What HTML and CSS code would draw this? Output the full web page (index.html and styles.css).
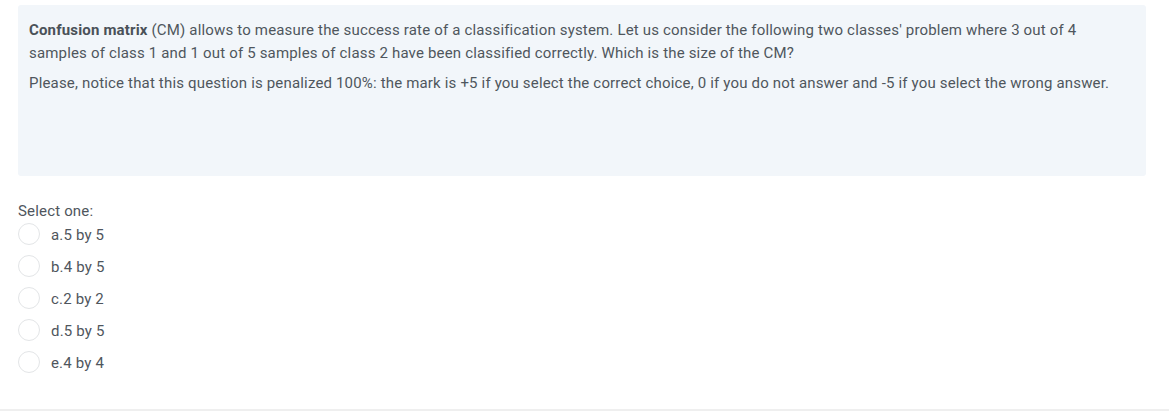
FILE: index.html
```html
<!DOCTYPE html>
<html>
<head>
<meta charset="utf-8">
<link rel="stylesheet" href="styles.css">
</head>
<body>
<div class="page">
  <div class="formulation">
    <p><strong>Confusion matrix</strong> (CM) allows to measure the success rate of a classification system. Let us consider the following two classes' problem where 3 out of 4 samples of class 1 and 1 out of 5 samples of class 2 have been classified correctly. Which is the size of the CM?</p>
    <p>Please, notice that this question is penalized 100%: the mark is +5 if you select the correct choice, 0 if you do not answer and -5 if you select the wrong answer.</p>
  </div>
  <div class="answers">
    <div class="prompt">Select one:</div>
    <label class="opt"><span class="radio"></span><span class="txt">a.5 by 5</span></label>
    <label class="opt"><span class="radio"></span><span class="txt">b.4 by 5</span></label>
    <label class="opt"><span class="radio"></span><span class="txt">c.2 by 2</span></label>
    <label class="opt"><span class="radio"></span><span class="txt">d.5 by 5</span></label>
    <label class="opt"><span class="radio"></span><span class="txt">e.4 by 4</span></label>
  </div>
</div>
<div class="footer-line"></div>
</body>
</html>
```
FILE: styles.css
```css
html, body {
  margin: 0;
  padding: 0;
  background: #fff;
}
body {
  font-family: Roboto, "Liberation Sans", sans-serif;
  font-size: 15px;
  letter-spacing: 0.17px;
  color: #4f565d;
  height: 412px;
  position: relative;
  overflow: hidden;
}
.page {
  padding: 5px 23px 0 18px;
}
.formulation {
  background: #f2f6fa;
  border-radius: 3px;
  height: 157px;
  padding: 14px 11px 0 11px;
}
.formulation p {
  margin: 0 0 7px 0;
  line-height: 23px;
}
.formulation strong {
  font-weight: 700;
  color: #4a5158;
}
.answers {
  margin-top: 28px;
}
.prompt {
  line-height: 14px;
  height: 14px;
}
.opt {
  display: flex;
  align-items: center;
  height: 32px;
}
.radio {
  width: 22px;
  height: 22px;
  border: 1px solid #e3e5e7;
  border-radius: 50%;
  background: #fff;
  box-sizing: border-box;
  margin-right: 11px;
  flex: none;
}
.txt {
  line-height: 20px;
  padding-top: 1px;
}
.footer-line {
  position: absolute;
  left: 0;
  right: 0;
  top: 409px;
  height: 2px;
  background: #efefef;
}
```
